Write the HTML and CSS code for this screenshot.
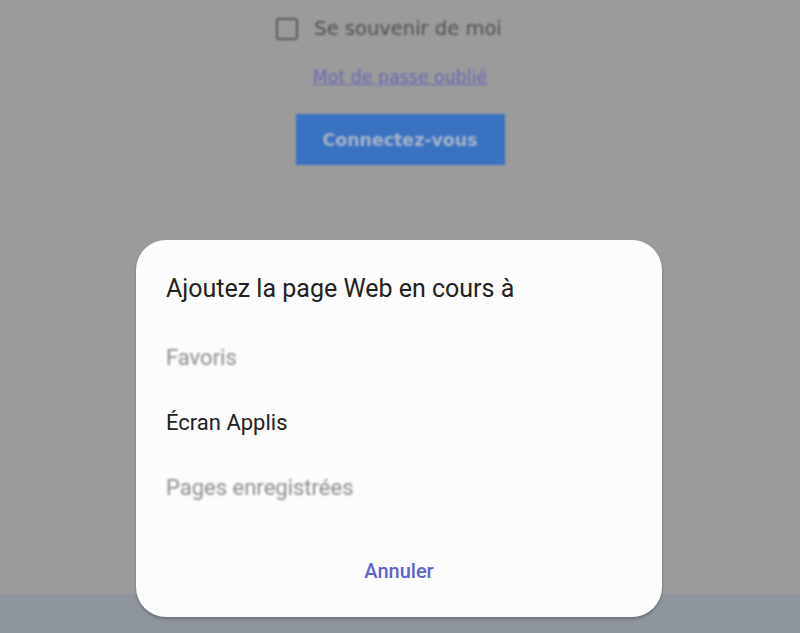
FILE: index.html
```html
<!DOCTYPE html>
<html lang="fr">
<head>
  <meta charset="UTF-8">
  <title>Connexion</title>
  <link rel="stylesheet" href="styles.css">
</head>
<body>

  <div class="page">
    <div class="login">
      <label class="remember"><span class="box"></span>Se souvenir de moi</label>
      <a class="forgot" href="#">Mot de passe oublié</a>
      <button class="submit">Connectez-vous</button>
    </div>
    <div class="navbar"></div>
  </div>

  <!-- Add to dialog -->
  <div class="sheet">
    <div class="sheet-title">Ajoutez la page Web en cours à</div>
    <ul class="options">
      <li class="option disabled">Favoris</li>
      <li class="option">Écran Applis</li>
      <li class="option disabled">Pages enregistrées</li>
    </ul>
    <div class="sheet-actions">
      <button class="cancel">Annuler</button>
    </div>
  </div>

</body>
</html>
```

FILE: styles.css
```css
body {
  margin: 0;
  background-color: #9b9b9b;
  font-family: Roboto, "Noto Sans", sans-serif;
  overflow: hidden;
}

.page {
  height: 633px;
  display: flex;
  flex-direction: column;
}

.login {
  flex: 1;
  display: flex;
  flex-direction: column;
  align-items: center;
  padding-top: 17px;
  filter: blur(1.2px);
  font-family: "DejaVu Sans", sans-serif;
}

.remember {
  display: flex;
  align-items: center;
  gap: 16px;
  font-size: 19.5px;
  color: #505050;
  margin-left: -22px;
}

.box {
  width: 18px;
  height: 18px;
  border: 2px solid #5a5a5a;
  border-radius: 3px;
}

.forgot {
  margin-top: 27px;
  font-size: 17.4px;
  color: #6866b6;
  text-decoration: underline;
}

.submit {
  margin-top: 27px;
  width: 209px;
  height: 51px;
  border: none;
  background-color: #3a72c2;
  color: #a7b4c8;
  font-family: "DejaVu Sans", sans-serif;
  font-weight: bold;
  font-size: 17.4px;
}

.navbar {
  height: 39px;
  background-color: #8e959c;
}

.sheet {
  position: absolute;
  left: 136px;
  bottom: 16px;
  width: 526px;
  background-color: #fcfcfc;
  border-radius: 30px;
  box-shadow: 0 2px 3px rgba(0, 0, 0, 0.25);
  padding: 34px 30px 34px;
  box-sizing: border-box;
}

.sheet-title {
  font-size: 25px;
  line-height: 30px;
  color: #222;
}

.options {
  list-style: none;
  margin: 21px 0 0;
  padding: 0;
}

.option {
  font-size: 22px;
  line-height: 65px;
  color: #222;
}

.option.disabled {
  color: #8c8c8c;
  filter: blur(0.8px);
}

.sheet-actions {
  margin-top: 39px;
  text-align: center;
}

.cancel {
  background: none;
  border: none;
  padding: 0;
  font-family: Roboto, sans-serif;
  font-size: 20px;
  line-height: 24px;
  font-weight: 500;
  color: #5f62d0;
}
```
